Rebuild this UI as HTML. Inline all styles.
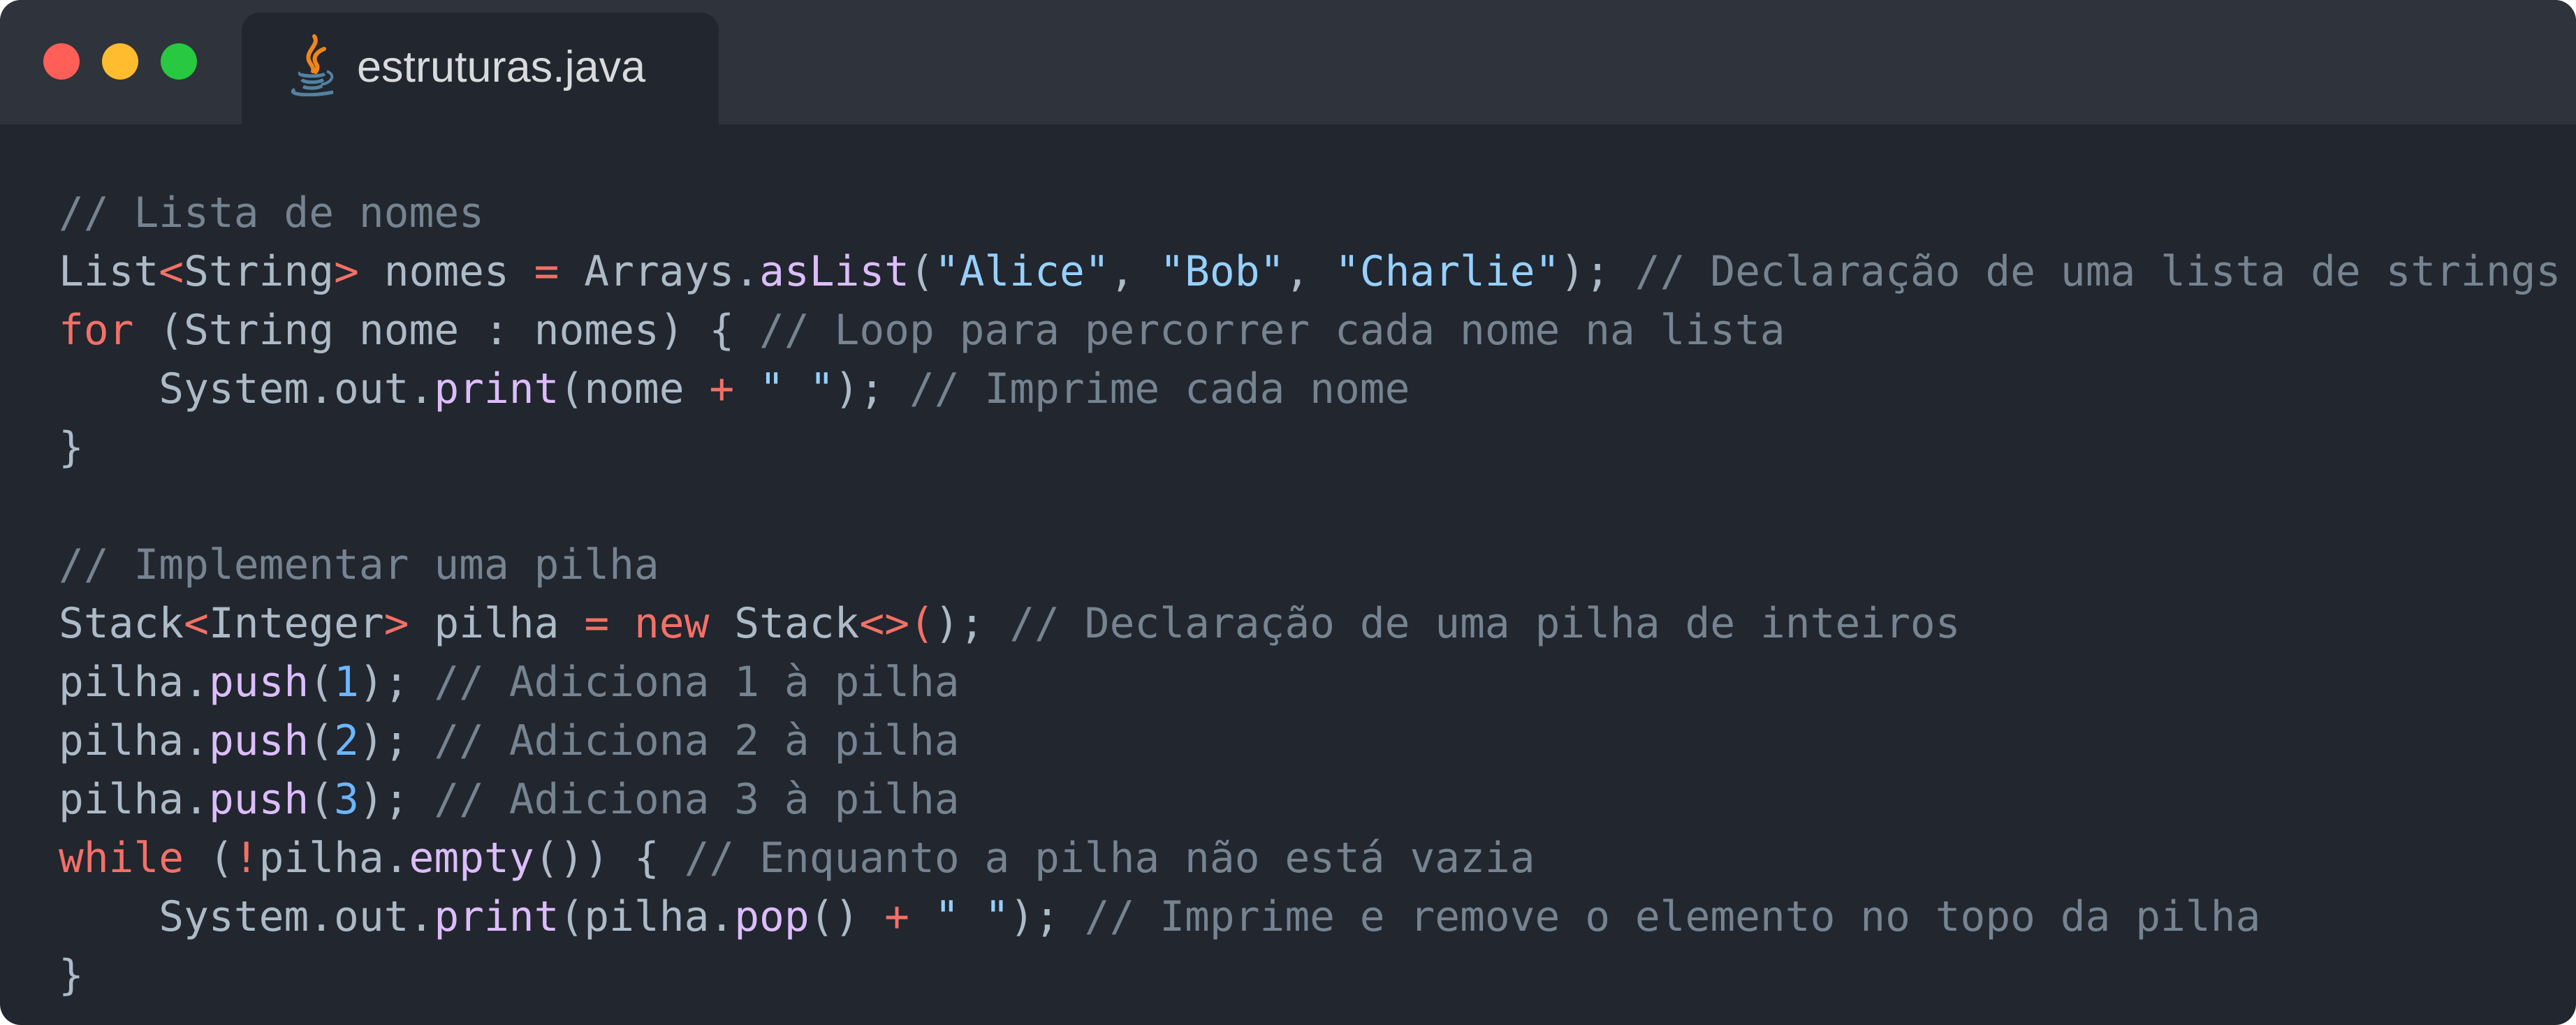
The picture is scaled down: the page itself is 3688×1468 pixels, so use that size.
<!DOCTYPE html>
<html><head><meta charset="utf-8"><style>
html,body{margin:0;padding:0;background:#fff;}
.win{position:absolute;left:0;top:0;width:3688px;height:1468px;background:#22262e;border-radius:30px;overflow:hidden;}
.bar{position:absolute;left:0;top:0;width:3688px;height:178px;background:#2f333b;}
.dot{position:absolute;top:62px;width:52px;height:52px;border-radius:50%;}
.tab{position:absolute;left:346px;top:18px;width:683px;height:170px;background:#22262e;border-radius:26px 26px 0 0;}
.title{position:absolute;left:511px;top:56px;font:63px "Liberation Sans",sans-serif;color:#d8dadd;line-height:80px;white-space:nowrap;}
pre{position:absolute;left:84px;top:264px;margin:0;font-family:"DejaVu Sans Mono","Liberation Mono",monospace;font-size:59.5px;line-height:84px;color:#adbac7;}
.c{color:#768390}.k{color:#f47067}.f{color:#dcbdfb}.s{color:#96d0ff}.n{color:#6cb6ff}
</style></head><body>
<div class="win">
<div class="bar"></div>
<div class="dot" style="left:62px;background:#ff5f57"></div>
<div class="dot" style="left:146px;background:#febc2e"></div>
<div class="dot" style="left:230px;background:#28c840"></div>
<div class="tab"></div>
<svg style="position:absolute;left:410px;top:48px" width="72" height="90" viewBox="0 0 72 90">
<path d="M40 4 C48 16 28 24 32 38 C34 44 40 48 38 54" stroke="#f0861a" stroke-width="6" fill="none" stroke-linecap="round"/>
<path d="M54 22 C40 28 38 36 43 44 C46 48 44 52 42 55" stroke="#f0861a" stroke-width="6" fill="none" stroke-linecap="round"/>
<path d="M20 56 C14 61 46 63 55 58" stroke="#5382a1" stroke-width="5" fill="none"/>
<path d="M58 54 C72 60 64 71 50 73" stroke="#5382a1" stroke-width="4" fill="none"/>
<path d="M22 66 C26 71 46 71 53 66" stroke="#5382a1" stroke-width="5" fill="none"/>
<path d="M24 76 C30 79 44 79 51 75" stroke="#5382a1" stroke-width="5" fill="none"/>
<path d="M12 80 C0 87 30 91 67 84" stroke="#5382a1" stroke-width="5" fill="none"/>
</svg>
<div class="title">estruturas.java</div>
<pre><span class="c">// Lista de nomes</span>
List<span class="k">&lt;</span>String<span class="k">&gt;</span> nomes <span class="k">=</span> Arrays.<span class="f">asList</span>(<span class="s">"Alice"</span>, <span class="s">"Bob"</span>, <span class="s">"Charlie"</span>); <span class="c">// Declaração de uma lista de strings</span>
<span class="k">for</span> (String nome : nomes) { <span class="c">// Loop para percorrer cada nome na lista</span>
    System.out.<span class="f">print</span>(nome <span class="k">+</span> <span class="s">" "</span>); <span class="c">// Imprime cada nome</span>
}

<span class="c">// Implementar uma pilha</span>
Stack<span class="k">&lt;</span>Integer<span class="k">&gt;</span> pilha <span class="k">=</span> <span class="k">new</span> Stack<span class="k">&lt;&gt;(</span>); <span class="c">// Declaração de uma pilha de inteiros</span>
pilha.<span class="f">push</span>(<span class="n">1</span>); <span class="c">// Adiciona 1 à pilha</span>
pilha.<span class="f">push</span>(<span class="n">2</span>); <span class="c">// Adiciona 2 à pilha</span>
pilha.<span class="f">push</span>(<span class="n">3</span>); <span class="c">// Adiciona 3 à pilha</span>
<span class="k">while</span> (<span class="k">!</span>pilha.<span class="f">empty</span>()) { <span class="c">// Enquanto a pilha não está vazia</span>
    System.out.<span class="f">print</span>(pilha.<span class="f">pop</span>() <span class="k">+</span> <span class="s">" "</span>); <span class="c">// Imprime e remove o elemento no topo da pilha</span>
}</pre>
</div>
</body></html>
